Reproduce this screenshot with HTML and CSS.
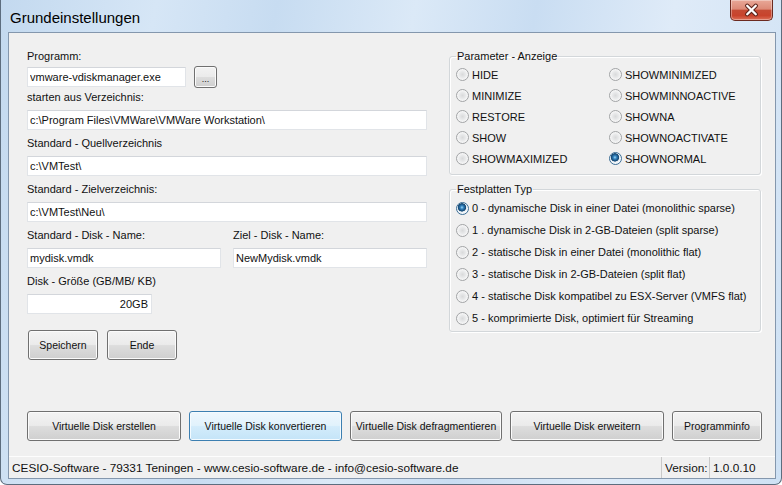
FILE: index.html
```html
<!DOCTYPE html>
<html lang="de">
<head>
    <meta charset="UTF-8">
    <title>Grundeinstellungen</title>
    <link rel="stylesheet" href="styles.css">
</head>
<body>
    <div class="window">
        <div class="titlebar">
            <span class="title">Grundeinstellungen</span>
            <div class="close">
                <svg width="43" height="20" viewBox="0 0 43 20">
                    <path d="M17 5.5 L26 14.5 M26 5.5 L17 14.5" stroke="#5b2219" stroke-width="4.6" stroke-linecap="round"/>
                    <path d="M17 5.5 L26 14.5 M26 5.5 L17 14.5" stroke="#ffffff" stroke-width="2.4" stroke-linecap="round"/>
                </svg>
            </div>
        </div>

        <div class="client">
            <div class="main">
                <div class="form">
                    <div class="field field-first">
                        <label>Programm:</label>
                        <div class="row">
                            <input type="text" class="txt txt-prog" value="vmware-vdiskmanager.exe">
                            <button class="btn btn-dots">...</button>
                        </div>
                    </div>
                    <div class="field">
                        <label>starten aus Verzeichnis:</label>
                        <input type="text" class="txt" value="c:\Program Files\VMWare\VMWare Workstation\">
                    </div>
                    <div class="field">
                        <label>Standard - Quellverzeichnis</label>
                        <input type="text" class="txt" value="c:\VMTest\">
                    </div>
                    <div class="field">
                        <label>Standard - Zielverzeichnis:</label>
                        <input type="text" class="txt" value="c:\VMTest\Neu\">
                    </div>
                    <div class="field split">
                        <div class="half">
                            <label>Standard - Disk - Name:</label>
                            <input type="text" class="txt" value="mydisk.vmdk">
                        </div>
                        <div class="half">
                            <label>Ziel - Disk - Name:</label>
                            <input type="text" class="txt" value="NewMydisk.vmdk">
                        </div>
                    </div>
                    <div class="field">
                        <label>Disk - Größe (GB/MB/ KB)</label>
                        <input type="text" class="txt txt-size" value="20GB">
                    </div>
                    <div class="form-buttons">
                        <button class="btn btn-small">Speichern</button>
                        <button class="btn btn-small">Ende</button>
                    </div>
                </div>

                <div class="options">
                    <fieldset class="group group-show">
                        <legend>Parameter - Anzeige</legend>
                        <div class="radio-grid">
                            <div class="radio"><span class="dot"></span>HIDE</div>
                            <div class="radio"><span class="dot"></span>MINIMIZE</div>
                            <div class="radio"><span class="dot"></span>RESTORE</div>
                            <div class="radio"><span class="dot"></span>SHOW</div>
                            <div class="radio"><span class="dot"></span>SHOWMAXIMIZED</div>
                            <div class="radio"><span class="dot"></span>SHOWMINIMIZED</div>
                            <div class="radio"><span class="dot"></span>SHOWMINNOACTIVE</div>
                            <div class="radio"><span class="dot"></span>SHOWNA</div>
                            <div class="radio"><span class="dot"></span>SHOWNOACTIVATE</div>
                            <div class="radio"><span class="dot checked"></span>SHOWNORMAL</div>
                        </div>
                    </fieldset>

                    <fieldset class="group group-disk">
                        <legend>Festplatten Typ</legend>
                        <div class="radio"><span class="dot checked"></span>0 - dynamische Disk in einer Datei (monolithic sparse)</div>
                        <div class="radio"><span class="dot"></span>1 . dynamische Disk in 2-GB-Dateien (split sparse)</div>
                        <div class="radio"><span class="dot"></span>2 - statische Disk in einer Datei (monolithic flat)</div>
                        <div class="radio"><span class="dot"></span>3 - statische Disk in 2-GB-Dateien (split flat)</div>
                        <div class="radio"><span class="dot"></span>4 - statische Disk kompatibel zu ESX-Server (VMFS flat)</div>
                        <div class="radio"><span class="dot"></span>5 - komprimierte Disk, optimiert für Streaming</div>
                    </fieldset>
                </div>
            </div>

            <div class="actions">
                <button class="btn btn-create">Virtuelle Disk erstellen</button>
                <button class="btn btn-convert focused">Virtuelle Disk konvertieren</button>
                <button class="btn btn-defrag">Virtuelle Disk defragmentieren</button>
                <button class="btn btn-expand">Virtuelle Disk erweitern</button>
                <button class="btn btn-info">Programminfo</button>
            </div>

            <div class="statusbar">
                <div class="sb-main">CESIO-Software - 79331 Teningen - www.cesio-software.de - info@cesio-software.de</div>
                <div class="sb-panel sb-label">Version:</div>
                <div class="sb-panel sb-version">1.0.0.10</div>
            </div>
        </div>
    </div>
</body>
</html>
```

FILE: styles.css
```css
body {
    margin: 0;
    background: #ffffff;
    font-family: "Liberation Sans", Arial, sans-serif;
    font-size: 11px;
    color: #111;
}

.window {
    width: 782px;
    height: 485px;
    box-sizing: border-box;
    border: 1px solid #5d6d7e;
    border-top: none;
    border-radius: 0 0 7px 7px;
    background: linear-gradient(100deg, #c3d9ef 0%, #d6e6f6 18%, #c7dcf1 32%, #dbe9f7 48%, #c9ddf2 62%, #dfebf8 78%, #cee1f4 100%);
    display: flex;
    flex-direction: column;
}

.titlebar {
    height: 32px;
    display: flex;
    justify-content: space-between;
    align-items: flex-start;
    flex-shrink: 0;
}

.title {
    margin: 9px 0 0 9px;
    font-size: 15px;
    line-height: 18px;
    color: #000;
}

.close {
    width: 43px;
    height: 21px;
    margin-right: 8px;
    box-sizing: border-box;
    border: 1px solid #6b2a20;
    border-top: none;
    border-radius: 0 0 5px 5px;
    background: linear-gradient(#e8a898 0%, #dd8a77 45%, #c54a33 52%, #c8432c 78%, #dd7058 100%);
    box-shadow: inset 0 0 0 1px rgba(255, 255, 255, 0.35);
    display: flex;
    align-items: center;
    justify-content: center;
}

.close svg {
    display: block;
}

.client {
    margin: 0 5px 5px 7px;
    height: 447px;
    box-sizing: border-box;
    border: 1px solid #8497ad;
    background: #f0f0f0;
    display: flex;
    flex-direction: column;
}

.main {
    height: 378px;
    box-sizing: border-box;
    padding-top: 17px;
    display: flex;
    flex-shrink: 0;
}

/* left column */
.form {
    width: 400px;
    margin-left: 18px;
    display: flex;
    flex-direction: column;
}

.field {
    margin-top: 7px;
}

.field label {
    display: block;
    line-height: 13px;
    margin-bottom: 6px;
}

.field-first {
    margin-top: 0;
}

.field-first label {
    margin-bottom: 3px;
}

.field-first + .field {
    margin-top: 3px;
}

.row {
    display: flex;
    align-items: center;
    gap: 8px;
}

.split {
    display: flex;
    gap: 12px;
}

.half {
    flex: 1;
}

.txt {
    display: block;
    width: 100%;
    height: 20px;
    box-sizing: border-box;
    margin: 0;
    padding: 0 2px;
    border: 1px solid #e1e4e8;
    border-top-color: #d3d6db;
    background: #fff;
    font-family: "Liberation Sans", Arial, sans-serif;
    font-size: 11px;
    color: #111;
    outline: none;
}

.txt-prog {
    width: 159px;
}

.txt-size {
    width: 125px;
    text-align: right;
    padding-right: 3px;
}

/* buttons */
.btn {
    box-sizing: border-box;
    margin: 0;
    padding: 0;
    border: 1px solid #707070;
    border-radius: 3px;
    background: linear-gradient(#f3f3f3 0%, #ebebeb 48%, #dddddd 52%, #cfcfcf 100%);
    box-shadow: inset 0 0 0 1px #fbfbfb;
    font-family: "Liberation Sans", Arial, sans-serif;
    font-size: 10.5px;
    color: #111;
    height: 30px;
}

.btn.focused {
    border-color: #3c7fb1;
    background: linear-gradient(#eef7fd 0%, #e1f2fc 48%, #d3ecfb 52%, #c4e4f8 100%);
    box-shadow: inset 0 0 0 1px #f4fbff;
}

.btn-dots {
    width: 23px;
    height: 22px;
    font-size: 9px;
    padding-top: 3px;
}

.form-buttons {
    margin-top: 16px;
    margin-left: 1px;
    display: flex;
    gap: 9px;
}

.btn-small {
    width: 70px;
}

/* right column */
.options {
    width: 312px;
    margin-left: 22px;
}

.group {
    margin: 0;
    padding: 1px 6px 5px 6px;
    border: 1px solid #d3d7da;
    border-radius: 3px;
    box-shadow: 1px 1px 0 #fff, inset 1px 1px 0 #fff;
}

.group legend {
    padding: 0 1px;
    line-height: 13px;
}

.group-disk {
    margin-top: 8px;
    padding-bottom: 2px;
}

.radio-grid {
    display: grid;
    grid-template-columns: 153px 1fr;
    grid-template-rows: repeat(5, 21px);
    grid-auto-flow: column;
}

.radio {
    display: flex;
    align-items: center;
    height: 21px;
    white-space: nowrap;
}

.group-disk .radio {
    height: 22px;
}

.dot {
    width: 13px;
    height: 13px;
    box-sizing: border-box;
    margin-right: 3px;
    border-radius: 50%;
    border: 1px solid #a2a4a6;
    background: radial-gradient(circle at 50% 50%, #d9dadb 0, #e8e9ea 3px, #f8f8f8 5.5px);
    flex-shrink: 0;
}

.dot.checked {
    border-color: #3b6e96;
    background: radial-gradient(circle at 45% 40%, #9fdcf7 0, #3584c0 1.6px, #174f7e 3.4px, #1d4a70 3.9px, #dfe9f1 4.4px, #f4f7fa 5.5px);
}

/* bottom action row */
.actions {
    height: 30px;
    padding-left: 18px;
    display: flex;
    gap: 8px;
    flex-shrink: 0;
}

.btn-create { width: 154px; }
.btn-convert { width: 153px; }
.btn-defrag { width: 152px; }
.btn-expand { width: 154px; }
.btn-info { width: 90px; }

.statusbar {
    margin-top: 15px;
    height: 22px;
    box-sizing: border-box;
    border-top: 1px solid #fdfdfd;
    display: flex;
    align-items: center;
    font-size: 11.8px;
    flex-shrink: 0;
}

.sb-main {
    flex: 1;
    padding-left: 3px;
    white-space: nowrap;
}

.sb-panel {
    height: 100%;
    box-sizing: border-box;
    border-left: 1px solid #c9c9c9;
    padding-left: 3px;
    display: flex;
    align-items: center;
}

.sb-label {
    width: 48px;
}

.sb-version {
    width: 66px;
}
```
